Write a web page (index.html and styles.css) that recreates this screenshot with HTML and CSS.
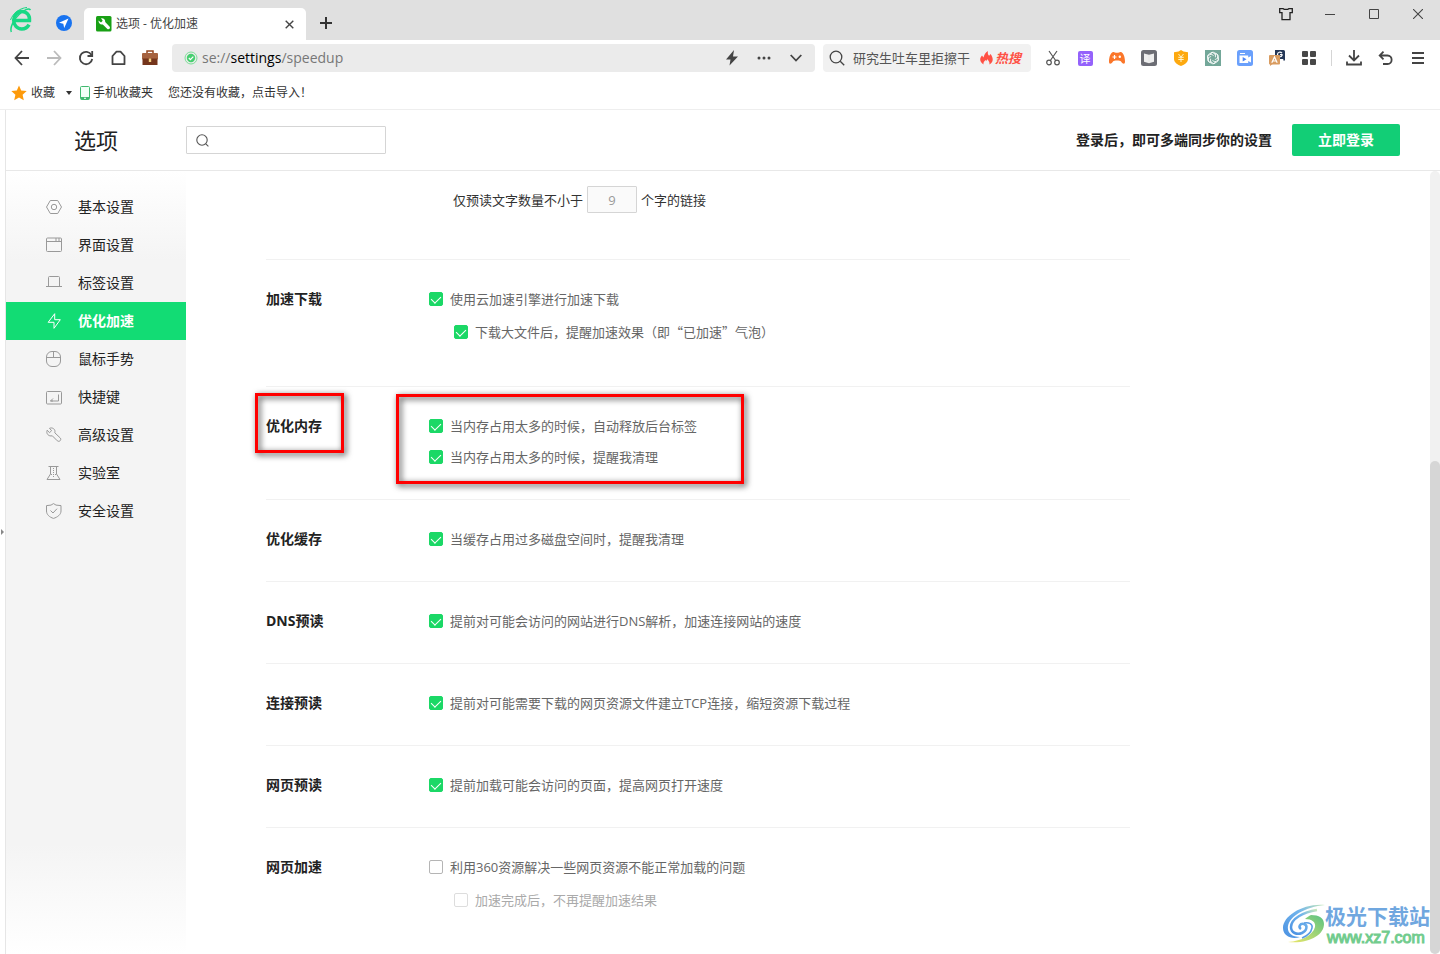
FILE: index.html
```html
<!DOCTYPE html>
<html lang="zh-CN">
<head>
<meta charset="utf-8">
<title>选项 - 优化加速</title>
<link rel="stylesheet" href="styles.css">
</head>
<body>
<header class="titlebar">
  <svg class="logo" width="26" height="28" viewBox="0 0 26 28" fill="none"><path d="M6 14.500h15.500C22 9 18.500 5.500 13.700 5.500 9 5.500 5.700 9.500 5.700 14.300s3.300 8.700 8 8.700c3.300 0 5.800-1.500 7.300-4.300" stroke="#18d884" stroke-width="3.500"/><path d="M3.300 26C1.500 22 6 13 11 8.500 16 4 20.500 1.500 22.500 4" stroke="#18d884" stroke-width="1.500"/><path d="M2.500 14C5 7 12 2 19 1.500" stroke="#18d884" stroke-width="1"/></svg>
  <svg class="pinned" width="16" height="16" viewBox="0 0 16 16"><circle cx="8" cy="8" r="8" fill="#1873f0"/><path d="M12.500 3.500 3 7.800l4.300.9.900 4.300z" fill="#fff"/></svg>
  <div class="tab">
    <svg width="16" height="16" viewBox="0 0 16 16"><rect width="15.500" height="15.500" rx="1.500" fill="#19a015"/><path d="M2.500 4.500 5 6.500 6.700 4.700 5 2.300c2.300-.5 4.500 1 4.200 3.700l4.500 4.800c1 1.400-.8 3.200-2.300 2.200L6.800 8.400C4.200 8.900 2.300 7 2.500 4.500z" fill="#fff"/></svg>
    <span class="tab-title">选项 - 优化加速</span>
    <button class="plain" aria-label="关闭标签"><svg width="9" height="9" viewBox="0 0 9 9" stroke="#444" stroke-width="1.400"><path d="M.7.700l7.600 7.600M8.300.7.700 8.300"/></svg></button>
  </div>
  <button class="plain new-tab" aria-label="新建标签"><svg width="12" height="12" viewBox="0 0 12 12" stroke="#333" stroke-width="2"><path d="M6 0v12M0 6h12"/></svg></button>
  <div class="window-buttons">
    <button class="plain" aria-label="皮肤"><svg width="14" height="14" viewBox="0 0 14 14" fill="none" stroke="#222" stroke-width="1.300"><path d="M.7 1.700h3.500c1 1 4.600 1 5.600 0h3.500v4h-2.300v7H3v-7H.7z"/></svg></button>
    <button class="plain" aria-label="最小化"><svg width="10" height="10" viewBox="0 0 10 10" stroke="#444"><path d="M0 5.500h10"/></svg></button>
    <button class="plain" aria-label="最大化"><svg width="10" height="10" viewBox="0 0 10 10" fill="none" stroke="#444"><path d="M.5.500h9v9h-9z"/></svg></button>
    <button class="plain" aria-label="关闭"><svg width="10" height="10" viewBox="0 0 10 10" stroke="#444" stroke-width="1.100"><path d="M0 0l10 10M10 0 0 10"/></svg></button>
  </div>
</header>

<nav class="toolbar" aria-label="工具栏">
  <button class="plain" aria-label="后退"><svg width="16" height="16" viewBox="0 0 16 16" fill="none" stroke="#444" stroke-width="1.800"><path d="M8 1 1.500 8 8 15M1.500 8H15"/></svg></button>
  <button class="plain" aria-label="前进"><svg width="16" height="16" viewBox="0 0 16 16" fill="none" stroke="#bbb" stroke-width="1.800"><path d="m8 1 6.500 7L8 15M14.500 8H1"/></svg></button>
  <button class="plain" aria-label="刷新"><svg width="16" height="16" viewBox="0 0 16 16" fill="none" stroke="#444" stroke-width="1.800"><path d="M13.500 5A6.200 6.200 0 1 0 14.200 9"/><path d="M14.200 1v5H9.500"/></svg></button>
  <button class="plain" aria-label="主页"><svg width="16" height="16" viewBox="0 0 16 16" fill="none" stroke="#444" stroke-width="1.800" stroke-linejoin="round"><path d="M2.500 14.200V6L6.500 1.700h4l4 4.300v8.200z"/></svg></button>
  <button class="plain" aria-label="工具箱"><svg width="16" height="16" viewBox="0 0 16 16"><path d="M5 3.500V1h6v2.500" fill="none" stroke="#93451f" stroke-width="1.500"/><rect y="3" width="16" height="6.500" rx="1" fill="#a5623f"/><path d="M.5 8.500h15V15H.5z" fill="#74351b"/><rect x="6.800" y="8.500" width="2.400" height="3.500" fill="#f6d283"/></svg></button>
  <div class="address">
    <svg width="14" height="14" viewBox="0 0 14 14" fill="none"><circle cx="7" cy="7" r="6" stroke="#7ddf98"/><circle cx="7" cy="7" r="4.200" fill="#47cf70"/><path d="m4.800 7 1.600 1.600 2.900-3" stroke="#fff" stroke-width="1.200"/></svg>
    <div class="address-text" role="textbox" contenteditable="true" spellcheck="false" aria-label="地址栏">se://<b>settings</b>/speedup</div>
    <button class="plain" aria-label="极速模式"><svg width="12" height="16" viewBox="0 0 12 16"><path d="M8 0 0 9.500h4.500L3.500 15.500 12 6.500H7z" fill="#444"/></svg></button>
    <button class="plain" aria-label="更多"><svg width="14" height="4" viewBox="0 0 14 4" fill="#444"><circle cx="2" cy="2" r="1.500"/><circle cx="7" cy="2" r="1.500"/><circle cx="12" cy="2" r="1.500"/></svg></button>
    <button class="plain" aria-label="展开"><svg width="12" height="8" viewBox="0 0 12 8" fill="none" stroke="#444" stroke-width="1.800"><path d="m.7 1 5.300 5.500L11.300 1"/></svg></button>
  </div>
  <div class="hot-search">
    <svg width="16" height="16" viewBox="0 0 16 16" fill="none" stroke="#444" stroke-width="1.300"><circle cx="7" cy="7" r="5.800"/><path d="m11.200 11.200 4 4"/></svg>
    <input type="text" aria-label="搜索" value="研究生吐车里拒擦干">
    <svg width="13" height="14" viewBox="0 0 13 14"><path d="M3.500 13.500C-.5 11-.7 7.500 2 4.500L3.500 6.500C4.300 3.500 5.300 1.500 8 0c-.5 2.500 0 3.500 1.200 4.800L10.500 3c2.800 3.500 3.500 8-1.200 10.500C10 11 8.500 10 7.500 8c-.5 2-1.500 2-2 1C4 10.500 3.200 11.500 3.500 13.500z" fill="#ff5145"/></svg>
    <span class="hot">热搜</span>
  </div>
  <div class="extensions">
    <button class="plain" aria-label="截图"><svg width="14" height="16" viewBox="0 0 14 16" fill="none" stroke="#555" stroke-width="1.200"><path d="m3 1 7 10M11 1 4 11"/><circle cx="3" cy="12.500" r="2.300"/><circle cx="11" cy="12.500" r="2.300"/></svg></button>
    <button class="plain" aria-label="翻译"><span class="translate">译</span></button>
    <button class="plain" aria-label="游戏"><svg width="16" height="14" viewBox="0 0 16 14"><path d="M4 1C1.500 1.500 0 6.500 0 10.500 0 13.500 2 13.500 4 10.500c1-1.200 7-1.200 8 0 2 3 4 3 4 0C16 6.500 14.500 1.500 12 1c-1.500-.3-2 .8-4 .8S5.500.7 4 1z" fill="#fb7629"/><path d="M3.500 6h4M5.500 4v4" stroke="#fff" stroke-width="1.200"/><circle cx="10.800" cy="5.700" r="1.200" fill="#fff"/></svg></button>
    <button class="plain" aria-label="阅读"><svg width="16" height="16" viewBox="0 0 16 16"><rect width="16" height="16" rx="2.500" fill="#6c6d74"/><path d="m3 3.500 5 1.300 5-1.300v8.200l-5 1.600-5-1.600z" fill="#eee"/><path d="M8 5v8" stroke="#ddd" stroke-width=".5"/></svg></button>
    <button class="plain" aria-label="优惠"><svg width="16" height="16" viewBox="0 0 16 16"><path d="m8 0 2.500 1.500 4.500.8V9c0 3.500-4 6-7 7-3-1-7-3.500-7-7V2.300l4.500-.8z" fill="#fda910"/><path d="m5.500 4 2.500 3 2.500-3M8 7v5M5.300 7.300h5.400M5.300 9.500h5.400" fill="none" stroke="#fff3cc" stroke-width="1"/></svg></button>
    <button class="plain" aria-label="智能助手"><svg width="16" height="16" viewBox="0 0 16 16" fill="none" stroke="#fff" stroke-width=".8"><path d="M0 0h16v16H0z" fill="#73a799" stroke="none"/><g id="petal"><path d="M5.500 4.800c0-2.300 2.500-3.300 4.300-2L12.500 4.500v3.800L9.800 9.700"/></g><use href="#petal" transform="rotate(60 8 8)"/><use href="#petal" transform="rotate(120 8 8)"/><use href="#petal" transform="rotate(180 8 8)"/><use href="#petal" transform="rotate(240 8 8)"/><use href="#petal" transform="rotate(300 8 8)"/></svg></button>
    <button class="plain" aria-label="录屏"><svg width="16" height="16" viewBox="0 0 16 16"><rect width="16" height="16" rx="2.500" fill="#6aa0fc"/><path d="M2.500 5.500h8.700v2L14 6v6.500l-2.800-1.400v2H2.500z" fill="#fff"/><path d="m5.700 7 3.800 2.200-3.800 2.200z" fill="#4c86f5"/><path d="M3 3.500h5" stroke="#fff"/></svg></button>
    <button class="plain" aria-label="划词翻译"><svg width="16" height="16" viewBox="0 0 16 16"><path d="M6 0h8.500A1.500 1.500 0 0 1 16 1.500v9h-1.700V9H6z" fill="#253858"/><path d="M13 3.200C11.500 1.500 8.500 2 8.500 4.500s3.500 3 4.500 1V4.700h-2" fill="none" stroke="#fff" stroke-width="1.200"/><rect y="5" width="11" height="9.500" rx="1" fill="#d99c60"/><path d="M1 14v2l2.500-2z" fill="#d99c60"/><path d="M2.800 12.800 5.500 7l2.700 5.800M4 11h3" fill="none" stroke="#fff" stroke-width="1.200"/></svg></button>
    <button class="plain" aria-label="扩展中心"><svg width="14" height="14" viewBox="0 0 14 14" fill="#484848"><rect width="6" height="6" rx="1"/><rect x="8" width="6" height="6" rx="1"/><rect y="8" width="6" height="6" rx="1"/><rect x="8" y="8" width="6" height="6" rx="1"/></svg></button>
  </div>
  <span class="divider"></span>
  <button class="plain" aria-label="下载"><svg width="16" height="16" viewBox="0 0 16 16" fill="none" stroke="#444" stroke-width="1.800"><path d="M8 0v10.500M3 5.500l5 5 5-5M1 11.500v3h14v-3"/></svg></button>
  <button class="plain" aria-label="恢复"><svg width="16" height="14" viewBox="0 0 16 14" fill="none" stroke="#444" stroke-width="1.800"><path d="M2 4.500h7.500c5.500 0 5.500 8.500 0 8.500H5M5.500.7 1.700 4.500l3.800 3.800"/></svg></button>
  <button class="plain" aria-label="菜单"><svg width="12" height="12" viewBox="0 0 12 12" stroke="#444" stroke-width="1.800"><path d="M0 1h12M0 6h12M0 11h12"/></svg></button>
</nav>

<nav class="bookmarks" aria-label="收藏栏">
  <button class="plain fav"><svg width="16" height="16" viewBox="0 0 16 16"><path d="m8 .5 2.200 5 5.500.6-4.100 3.700 1.200 5.500L8 12.500l-4.800 2.800 1.200-5.500L.3 6.100l5.500-.6z" fill="#fd9a0b"/></svg>收藏<svg class="caret" width="6" height="4" viewBox="0 0 6 4"><path d="M0 0h6L3 4z" fill="#333"/></svg></button>
  <button class="plain phone"><svg width="10" height="14" viewBox="0 0 10 14"><rect x=".5" y=".5" width="9" height="13" rx="1" fill="#f3fff7" stroke="#41b96f"/><path d="M1 11h8v2.500H1z" fill="#41b96f"/><path d="M4 12.300h2" stroke="#fff"/></svg>手机收藏夹</button>
  <a class="import" href="#">您还没有收藏，点击导入！</a>
</nav>

<div class="viewport">
  <div class="gutter"><svg width="4" height="6" viewBox="0 0 4 6"><path d="M1 0v6l3-3z" fill="#888"/></svg></div>
  <div class="page">
    <header class="page-header">
      <h1>选项</h1>
      <label class="page-search">
        <svg width="13" height="13" viewBox="0 0 13 13" fill="none" stroke="#555" stroke-width="1.100"><circle cx="6" cy="6" r="5.200"/><path d="m9.800 9.800 2.600 2.600"/></svg>
        <input type="text" aria-label="搜索设置">
      </label>
      <p class="sync">登录后，即可多端同步你的设置</p>
      <button class="login">立即登录</button>
    </header>
    <div class="columns">
      <nav class="sidebar" aria-label="设置">
        <a href="#"><svg viewBox="0 0 16 16"><path d="M4.300 1.500h7.400L15.500 8l-3.800 6.500H4.300L.5 8z"/><circle cx="8" cy="8" r="2.700"/></svg>基本设置</a>
        <a href="#"><svg viewBox="0 0 16 16"><rect x=".5" y="1" width="15" height="13.500" rx="1"/><path d="M.5 4.500h15M10 1v3M13 1v3"/></svg>界面设置</a>
        <a href="#"><svg viewBox="0 0 16 16"><path d="M2.500 11.500V2.500a1 1 0 0 1 1-1h9a1 1 0 0 1 1 1v9M0 11.500h16"/></svg>标签设置</a>
        <a href="#" class="active" aria-current="page"><svg viewBox="0 0 16 16"><path d="M8.700.7 2.200 9.300H8v6l6.300-8.600H8.700z"/></svg>优化加速</a>
        <a href="#"><svg viewBox="0 0 16 16"><rect x=".5" y=".5" width="14" height="15" rx="5.500"/><path d="M.5 6.500h14M7.500.5v6"/></svg>鼠标手势</a>
        <a href="#"><svg viewBox="0 0 16 16"><rect x=".5" y="2.500" width="15" height="12.500" rx="1"/><path d="M12.500 5.500v6.500h-8L7 9.500M4.500 12H7"/></svg>快捷键</a>
        <a href="#"><svg viewBox="0 0 16 16"><path d="M1.200 3.200 3.500 5.700 5.600 3.700 3.500 1.300c3-1.300 6.300 1 5.300 4.500l5.500 5.200c1.500 2-1 4.400-3 2.800L6.300 8.800C2.700 9.700-.2 6.700 1.200 3.200z"/></svg>高级设置</a>
        <a href="#"><svg viewBox="0 0 16 16"><path d="M2.500 1.500h10M4.500 1.500V9L1 14.500h13L10.500 9V1.500"/><path d="M7.500 3v9M5 9.500h5" stroke-dasharray="1 1"/></svg>实验室</a>
        <a href="#"><svg viewBox="0 0 16 16"><path d="m7.500.6 2.500 1.500 5 .5V8c0 3.600-3.500 6.200-7.500 7.400C3.500 14.200.5 11.600.5 8V2.600l4.500-.5z"/><path d="M4.500 7.500 7 10l4-4.300"/></svg>安全设置</a>
      </nav>
      <main class="content">
        <div class="preload">
          <label for="words">仅预读文字数量不小于</label><input id="words" type="text" value="9" disabled><span>个字的链接</span>
        </div>
        <section>
          <h2>加速下载</h2>
          <div class="options">
            <label><input type="checkbox" checked>使用云加速引擎进行加速下载</label>
            <label class="sub"><input type="checkbox" checked>下载大文件后，提醒加速效果（即“已加速”气泡）</label>
          </div>
        </section>
        <section class="memory">
          <h2>优化内存</h2>
          <div class="options">
            <label><input type="checkbox" checked>当内存占用太多的时候，自动释放后台标签</label>
            <label><input type="checkbox" checked>当内存占用太多的时候，提醒我清理</label>
          </div>
          <span class="mark mark-title"></span>
          <span class="mark mark-options"></span>
        </section>
        <section>
          <h2>优化缓存</h2>
          <div class="options"><label><input type="checkbox" checked>当缓存占用过多磁盘空间时，提醒我清理</label></div>
        </section>
        <section>
          <h2>DNS预读</h2>
          <div class="options"><label><input type="checkbox" checked>提前对可能会访问的网站进行DNS解析，加速连接网站的速度</label></div>
        </section>
        <section>
          <h2>连接预读</h2>
          <div class="options"><label><input type="checkbox" checked>提前对可能需要下载的网页资源文件建立TCP连接，缩短资源下载过程</label></div>
        </section>
        <section>
          <h2>网页预读</h2>
          <div class="options"><label><input type="checkbox" checked>提前加载可能会访问的页面，提高网页打开速度</label></div>
        </section>
        <section>
          <h2>网页加速</h2>
          <div class="options">
            <label><input type="checkbox">利用360资源解决一些网页资源不能正常加载的问题</label>
            <label class="sub disabled"><input type="checkbox" disabled>加速完成后，不再提醒加速结果</label>
          </div>
        </section>
      </main>
      <div class="scrollbar"><div class="thumb"></div></div>
    </div>
  </div>
</div>

<div class="watermark">
  <svg width="42" height="42" viewBox="0 0 42 42" fill="none">
    <defs>
      <linearGradient id="blue" x1="0" y1="1" x2="1" y2="0"><stop offset="0" stop-color="#4a90e2"/><stop offset=".6" stop-color="#72b5ec"/><stop offset="1" stop-color="#c6e8b8"/></linearGradient>
      <linearGradient id="green" x1="0" y1="1" x2="1" y2="0"><stop offset="0" stop-color="#f0e868"/><stop offset="1" stop-color="#58c283"/></linearGradient>
    </defs>
    <path d="M42 1C20-1 0 12 0 24c0 8 9 12 17 9C8 33 4 28 5 22 7 12 22 3 42 1z" fill="url(#blue)"/>
    <path d="M34 6C20 8 8 15 8 23c0 6 6 8 11 6 5-2 6-8 2-9-4-1-6 3-3 5" stroke="url(#blue)" stroke-width="2.500"/>
    <path d="M28 11c8 0 13 3 13 9 0 11-15 20-36 18 14-1 25-7 27-15 1-5-3-8-10-8 2-2 4-3 6-4z" fill="url(#green)"/>
    <path d="M19 34c5-2 9-5 10-10 1-4-3-6-8-5" stroke="#5a9de4" stroke-width="1.500"/>
  </svg>
  <div class="watermark-text"><span class="site-name">极光下载站</span><span class="site-url">www.xz7.com</span></div>
</div>
</body>
</html>
```

FILE: styles.css
```css
* { box-sizing: border-box; }

body {
  margin: 0;
  min-height: 100vh;
  display: flex;
  flex-direction: column;
  position: relative;
  background: #fff;
  color: #333;
  font: 13px/18px "Open Sans", "Noto Sans CJK SC", sans-serif;
}

h1, h2, p { margin: 0; }
a { color: inherit; text-decoration: none; }
input, button { font: inherit; }
svg { display: block; flex: none; }

.plain {
  border: 0;
  padding: 0;
  background: none;
  color: inherit;
  display: flex;
  align-items: center;
  justify-content: center;
  flex: none;
}

/* title bar */
.titlebar {
  height: 40px;
  background: #e0e0e0;
  display: flex;
  align-items: flex-end;
  padding-left: 8px;
}
.logo { margin-bottom: 6px; }
.pinned { margin: 0 12px 9px 22px; }
.tab-title { flex: 1; }
.tab {
  width: 222px;
  height: 32px;
  padding: 0 12px;
  border-radius: 5px 5px 0 0;
  background: #fff;
  display: flex;
  align-items: center;
  gap: 4px;
  font-size: 12px;
  color: #444;
}
.new-tab { width: 40px; height: 34px; }
.window-buttons {
  margin-left: auto;
  align-self: flex-start;
  display: flex;
}
.window-buttons .plain { width: 44px; height: 28px; }

/* toolbar */
.toolbar {
  height: 36px;
  padding: 4px 6px;
  display: flex;
}
.toolbar .plain { width: 32px; height: 28px; }
.address {
  flex: 1;
  margin: 0 8px 0 6px;
  padding: 0 3px 0 12px;
  border-radius: 4px;
  background: #ebebeb;
  display: flex;
  align-items: center;
}
.address-text {
  flex: 1;
  margin-left: 4px;
  font-size: 14px;
  line-height: 20px;
  color: #777;
  outline: 0;
}
.address-text b { font-weight: 400; color: #000; }
.hot-search {
  width: 208px;
  padding: 0 10px 0 6px;
  border-radius: 4px;
  background: #f1f1f1;
  display: flex;
  align-items: center;
}
.hot-search input {
  flex: 1;
  min-width: 0;
  margin-left: 8px;
  padding: 0;
  border: 0;
  background: none;
  color: #555;
}
.hot { margin-left: 2px; color: #ff5145; font-weight: 700; font-style: italic; }
.extensions { margin-left: 6px; display: flex; }
.translate {
  width: 15px;
  height: 15px;
  border-radius: 2px;
  background: #9462fb;
  color: #fff;
  font-size: 11px;
  line-height: 15px;
}
.divider { width: 1px; margin: 6px; background: #d5d5d5; }

/* bookmarks bar */
.bookmarks {
  height: 34px;
  padding-left: 11px;
  border-bottom: 1px solid #eee;
  display: flex;
  align-items: center;
  font-size: 12px;
}
.fav { gap: 4px; }
.caret { margin-left: 7px; }
.phone { gap: 3px; margin: 0 15px 0 8px; }

/* settings page */
.viewport { flex: 1; display: flex; }
.gutter { width: 5px; display: flex; align-items: center; }
.page {
  flex: 1;
  border-left: 1px solid #e6e6e6;
  display: flex;
  flex-direction: column;
}
.page-header {
  height: 61px;
  padding-right: 40px;
  border-bottom: 1px solid #e8e8e8;
  display: flex;
  align-items: center;
  font-size: 14px;
}
.page-header h1 {
  width: 180px;
  padding-left: 68px;
  font-size: 22px;
  line-height: 30px;
  font-weight: 400;
  color: #222;
}
.page-search {
  width: 200px;
  height: 28px;
  padding: 0 9px;
  border: 1px solid #d5d5d5;
  border-radius: 1px;
  display: flex;
  align-items: center;
  gap: 8px;
}
.page-search input { flex: 1; min-width: 0; border: 0; padding: 0; outline: 0; }
.sync { margin: 0 20px 0 auto; font-weight: 700; color: #222; }
.login {
  width: 108px;
  height: 32px;
  border: 0;
  border-radius: 2px;
  background: #12ce76;
  color: #fff;
  font-weight: 700;
}

.columns { flex: 1; display: flex; }
.sidebar {
  width: 180px;
  padding-top: 17px;
  background: linear-gradient(#fff, #f4f4f4 90px, #f4f4f4 calc(100% - 110px), #fff);
}
.sidebar a {
  height: 38px;
  padding-left: 40px;
  display: flex;
  align-items: center;
  gap: 16px;
  font-size: 14px;
  color: #222;
}
.sidebar svg { width: 16px; height: 16px; fill: none; stroke: #999; }
.sidebar .active { background: #12dc74; color: #fff; font-weight: 700; }
.sidebar .active svg { stroke: #fff; }

.content { width: 864px; margin: 0 auto 0 80px; }
.preload {
  padding: 15px 0 46px 187px;
  display: flex;
  align-items: center;
  gap: 4px;
}
.preload input {
  width: 50px;
  height: 27px;
  padding: 0;
  border: 1px solid #d5d5d5;
  border-radius: 1px;
  background: #fafafa;
  color: #999;
  text-align: center;
}
.content section {
  position: relative;
  padding: 30px 0 33px;
  border-top: 1px solid #f1f1f1;
  display: flex;
}
.content h2 {
  width: 163px;
  font-size: 14px;
  line-height: 18px;
  font-weight: 700;
  color: #222;
}
.options { display: flex; flex-direction: column; gap: 13px; }
.options label { display: flex; align-items: center; gap: 7px; color: #666; }
.options .sub {
  margin: 2px 0 12px 25px;
  font-family: "Noto Sans CJK SC", sans-serif;
}
.options .disabled { color: #aaa; }

input[type="checkbox"] {
  appearance: none;
  width: 14px;
  height: 14px;
  margin: 0;
  border: 1px solid #b5b5b5;
  border-radius: 2px;
  background: #fff;
  display: flex;
  justify-content: center;
}
input[type="checkbox"]:disabled { border-color: #ddd; }
input[type="checkbox"]:checked { border-color: #1bd866; background: #1bd866; }
input[type="checkbox"]:checked::after {
  content: "";
  width: 5px;
  height: 8px;
  margin-top: 1px;
  border: solid #fff;
  border-width: 0 1px 1px 0;
  transform: rotate(45deg);
}

/* callout frames */
.mark {
  position: absolute;
  border: 3px solid #f00;
  filter: drop-shadow(2px 2px 3px rgba(0, 0, 0, 0.8));
  pointer-events: none;
}
.mark-title { left: -11px; top: 6px; width: 89px; height: 60px; }
.mark-options { left: 130px; top: 7px; width: 348px; height: 90px; }

.scrollbar {
  width: 10px;
  border-radius: 5px;
  background: #f1f1f1;
  display: flex;
  align-items: flex-end;
}
.thumb { width: 100%; height: 63%; border-radius: 5px; background: #d6d6d6; }

/* site badge */
.watermark {
  position: absolute;
  right: 10px;
  bottom: 6px;
  display: flex;
}
.watermark-text { display: flex; flex-direction: column; }
.site-name { font-size: 21px; line-height: 24px; font-weight: 700; color: #70a7df; }
.site-url {
  padding-left: 2px;
  font: 16px/20px "Liberation Sans", sans-serif;
  -webkit-text-stroke: 1px #72cc8e;
  color: #72cc8e;
}
```
